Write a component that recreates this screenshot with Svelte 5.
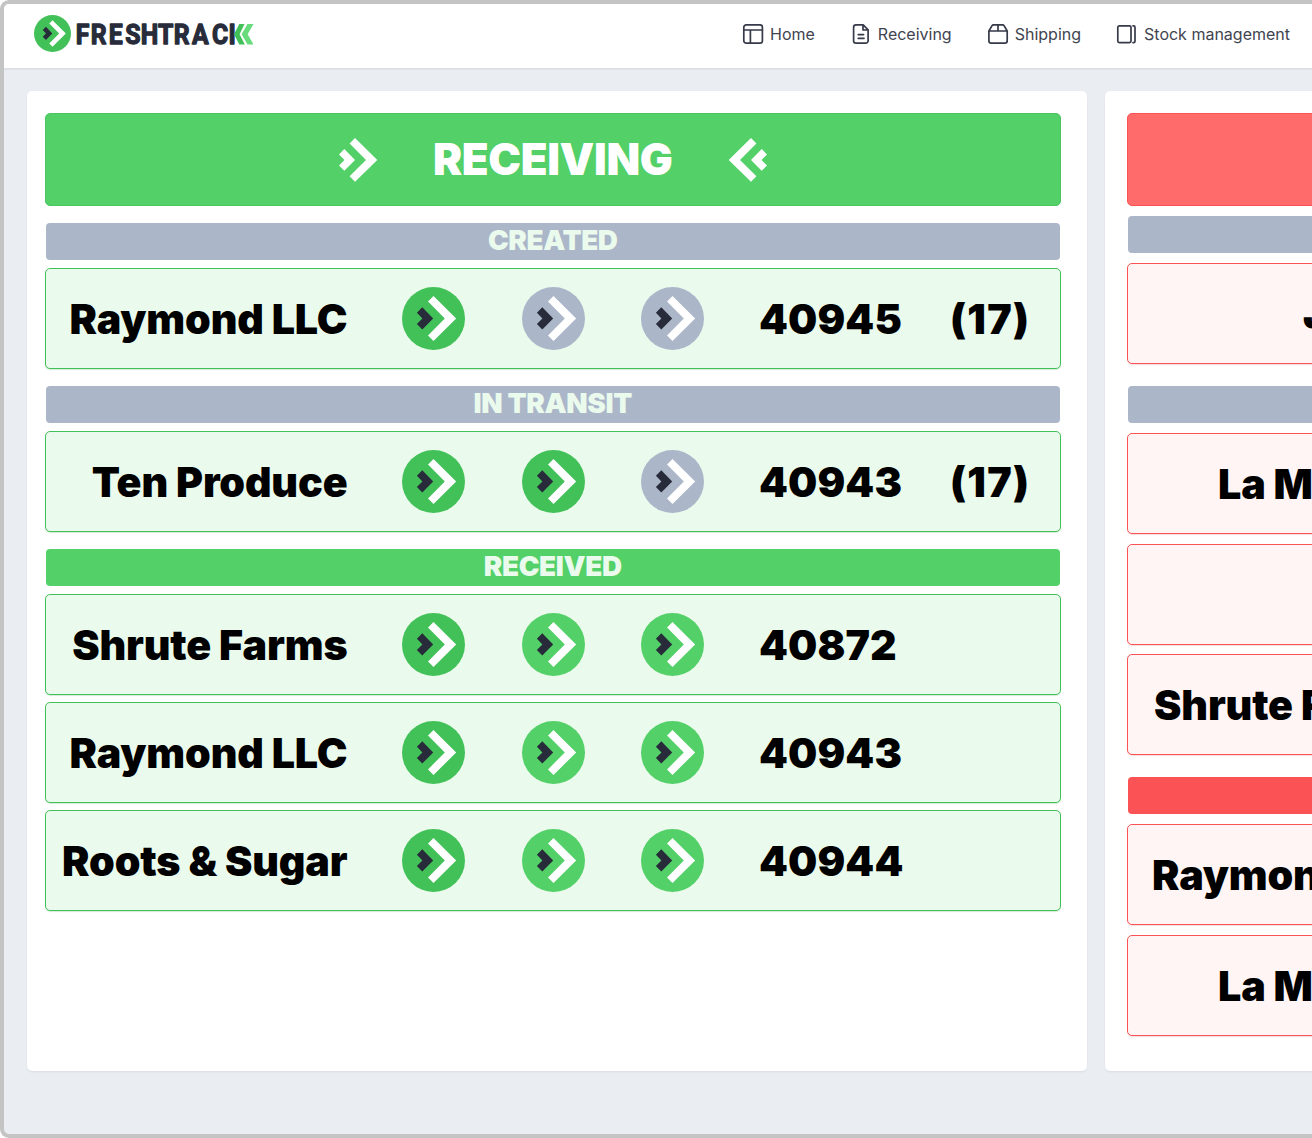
<script>
  const nav = [
    { icon: 'layout', label: 'Home' },
    { icon: 'file', label: 'Receiving' },
    { icon: 'box', label: 'Shipping' },
    { icon: 'stack', label: 'Stock management' }
  ];

  const incoming = [
    {
      title: 'CREATED',
      done: false,
      rows: [{ name: 'Raymond LLC', steps: ['solid', 'idle', 'idle'], order: '40945', count: '(17)' }]
    },
    {
      title: 'IN TRANSIT',
      done: false,
      rows: [{ name: 'Ten Produce', steps: ['solid', 'solid', 'idle'], order: '40943', count: '(17)' }]
    },
    {
      title: 'RECEIVED',
      done: true,
      rows: [
        { name: 'Shrute Farms', steps: ['solid', 'light', 'light'], order: '40872', count: '' },
        { name: 'Raymond LLC', steps: ['solid', 'light', 'light'], order: '40943', count: '' },
        { name: 'Roots & Sugar', steps: ['solid', 'light', 'light'], order: '40944', count: '' }
      ]
    }
  ];

  // indent is where the name begins inside its row
  const outgoing = [
    { done: false, rows: [{ name: 'J', indent: 175 }] },
    { done: false, rows: [{ name: 'La M', indent: 90 }, { name: '', indent: 0 }, { name: 'Shrute Farms', indent: 26 }] },
    { done: true, rows: [{ name: 'Raymond LLC', indent: 24 }, { name: 'La M', indent: 90 }] }
  ];
</script>

{#snippet chevrons(kind)}
  <svg class="mark {kind}" viewBox="0 0 63 63" aria-hidden="true">
    <circle class="disc" cx="31.5" cy="31.5" r="31.5" />
    <path class="small" d="M20.3 20.2 31.2 31.4 20.3 42.4 14.9 37 20.4 31.4 14.9 25.7Z" />
    <path class="big" d="M31.5 9 54.2 31.4 31.5 54 26 48.4 42.8 31.4 26 14.5Z" />
  </svg>
{/snippet}

{#snippet arrows(flipped)}
  <svg class="arrows" class:flipped viewBox="0 0 40 44" aria-hidden="true">
    <path d="M6.3 11 17 22 6.3 32.7 1 27.4 6.5 22 1 16.4Z M17 0 39.3 22 17 43.7 11.6 38.3 28 22 11.6 5.4Z" />
  </svg>
{/snippet}

<div class="window">
  <header>
    <div class="brand">
      <div class="badge">{@render chevrons('solid')}</div>
      <svg class="wordmark" viewBox="0 0 180 30" aria-label="FRESHTRACK">
        <text transform="scale(.9 1)" y="25" x="-0.2 16.4 36.4 54.8 72 91 108.6 129 151 169.4">FRESHTRACI</text>
        <path fill="#43c159" d="M168.5 5h-5.2L158 15.200l5.300 10.300h5.500L163.600 15.200Z" />
        <path fill="#68dc7c" d="M177.500 5h-6L165.600 15.200l5.900 10.300h6L171.700 15.200Z" />
      </svg>
    </div>
    <nav>
      {#each nav as item}
        <a class="link">
          <svg class="icon" viewBox="0 0 22 22" aria-hidden="true">
            {#if item.icon === 'layout'}
              <rect x="1.8" y="1.8" width="18.6" height="18.4" rx="2.4" />
              <path d="M2 7h18.4M8.4 7v13" />
            {:else if item.icon === 'file'}
              <path d="M6 1.8h7.2l4.9 5v11a2.4 2.4 0 0 1-2.4 2.4H6a2.4 2.4 0 0 1-2.4-2.4V4.2A2.4 2.4 0 0 1 6 1.8ZM13 2v5h5M8.2 11.6h5.3M8.2 15.3h5.8" />
            {:else if item.icon === 'box'}
              <path d="M1.9 8v9.8a2.4 2.4 0 0 0 2.4 2.4h13.5a2.4 2.4 0 0 0 2.4-2.4V8L17.2 2.8a2 2 0 0 0-1.7-1H6.6a2 2 0 0 0-1.7 1ZM2 8h18.2M11 2v6" />
            {:else}
              <rect x="1.8" y="2.8" width="13.2" height="16.8" rx="1.5" />
              <path d="M17 2.8h.6a1.4 1.4 0 0 1 1.4 1.4v14a1.4 1.4 0 0 1-1.4 1.4H17" />
            {/if}
          </svg>
          <span>{item.label}</span>
        </a>
      {/each}
    </nav>
  </header>

  <main>
    <section class="panel receiving">
      <div class="banner">
        {@render arrows(false)}
        <h1>RECEIVING</h1>
        {@render arrows(true)}
      </div>
      {#each incoming as group}
        <div class="group">
          <h2 class:done={group.done}>{group.title}</h2>
          <div class="rows">
            {#each group.rows as row}
              <div class="row">
                <span class="name">{row.name}</span>
                <div class="steps">
                  {#each row.steps as step}{@render chevrons(step)}{/each}
                </div>
                <span class="order">{row.order}</span>
                <span class="count">{row.count}</span>
              </div>
            {/each}
          </div>
        </div>
      {/each}
    </section>

    <section class="panel shipments">
      <div class="banner"></div>
      {#each outgoing as group}
        <div class="group">
          <h2 class:done={group.done}></h2>
          <div class="rows">
            {#each group.rows as row}
              <div class="row">
                <span class="name" style:padding-left="{row.indent}px">{row.name}</span>
              </div>
            {/each}
          </div>
        </div>
      {/each}
    </section>
  </main>
</div>

<style>
  :global(body) {
    background: #fff;
    overflow: hidden;
  }
  * {
    box-sizing: border-box;
  }
  .window {
    width: 1312px;
    height: 1138px;
    border: 4px solid #c4c4c4;
    border-right: 0;
    border-radius: 9px 0 0 9px;
    background: #eaeef3;
    overflow: hidden;
    font-family: Inter, 'Liberation Sans', sans-serif;
    color: #000;
  }
  header {
    height: 65px;
    background: #fff;
    border-bottom: 1px solid #dddde3;
    box-shadow: 0 1px 1px #e2e4ea;
    display: flex;
    justify-content: space-between;
    align-items: flex-start;
    padding: 11px 22px 0 30px;
  }
  .brand {
    display: flex;
  }
  .badge {
    width: 37px;
    height: 37px;
  }
  .badge .mark {
    width: 37px;
    height: 37px;
  }
  .wordmark {
    width: 180px;
    height: 30px;
    margin: 4px 0 0 5px;
  }
  .wordmark text {
    font: 700 27.5px Roboto, sans-serif;
    fill: #272b3a;
    stroke: #272b3a;
    stroke-width: 1.3;
    stroke-linejoin: round;
  }
  nav {
    display: flex;
    padding-top: 8px;
  }
  .link {
    display: flex;
    align-items: center;
    color: #41444f;
    font-size: 16px;
    line-height: 22px;
    white-space: nowrap;
  }
  .icon {
    width: 22px;
    height: 22px;
    margin-right: 6px;
    fill: none;
    stroke: #363a49;
    stroke-width: 1.7;
    stroke-linejoin: round;
    stroke-linecap: round;
  }
  .link + .link {
    margin-left: 35px;
  }
  main {
    display: flex;
    gap: 18px;
    padding: 22px 0 0 23px;
  }
  .panel {
    height: 980px;
    flex: none;
    background: #fff;
    border-radius: 5px;
    box-shadow: 0 1px 2px #d9dce4;
  }
  .receiving {
    width: 1060px;
    padding: 22px 26px 0 17.5px;
  }
  .shipments {
    width: 1060px;
    padding: 22px;
  }
  .banner {
    height: 93px;
    border: 1px solid #4bc560;
    border-radius: 5px;
    background: #53d068;
    display: flex;
    justify-content: center;
    align-items: center;
    gap: 55px;
    color: #fff;
  }
  .shipments .banner {
    background: #ff6b6b;
    border-color: #fb5355;
  }
  .arrows {
    width: 40px;
    height: 44px;
    fill: #fff;
  }
  .flipped {
    transform: scaleX(-1);
  }
  h1,
  h2 {
    margin: 0;
    font-weight: 900;
  }
  h1 {
    font-size: 43.8px;
    line-height: 50px;
    letter-spacing: -0.35px;
  }
  .group {
    margin-top: 17px;
    display: flex;
    flex-direction: column;
    gap: 8px;
  }
  .rows {
    display: flex;
    flex-direction: column;
    gap: 7.2px;
  }
  h2 {
    height: 37px;
    margin: 0 1px;
    border-radius: 4px;
    background: #abb6c9;
    color: #eafaec;
    font-size: 27.8px;
    line-height: 35px;
    letter-spacing: -0.35px;
    text-align: center;
  }
  .receiving h2.done {
    background: #53d068;
  }
  .row {
    height: 101px;
    flex: none;
    border: 1px solid #43c159;
    border-radius: 5px;
    background: #eafaec;
    display: flex;
    align-items: center;
    font-size: 41.2px;
    font-weight: 900;
    line-height: 52px;
    white-space: nowrap;
    box-shadow: 0 1px 1px #d4ecd8;
  }
  .name {
    letter-spacing: -0.15px;
    padding-top: 1px;
  }
  .receiving .name {
    width: 302px;
    text-align: right;
  }
  .steps {
    display: flex;
    gap: 56.7px;
    margin-left: 54.5px;
  }
  .mark {
    display: block;
    width: 63px;
    height: 63px;
  }
  .mark .disc {
    fill: #43c159;
  }
  .mark.light .disc {
    fill: #53d068;
  }
  .mark.idle .disc {
    fill: #abb6c9;
  }
  .mark .small {
    fill: #272b3a;
  }
  .mark .big {
    fill: #fff;
  }
  .order {
    width: 191px;
    margin-left: 54.7px;
    padding-top: 1px;
    letter-spacing: 0.1px;
  }
  .count {
    padding-top: 1px;
    letter-spacing: 1.3px;
  }
  .shipments .group {
    margin-top: 22px;
    gap: 10px;
  }
  .shipments .rows {
    gap: 9.6px;
  }
  .shipments .banner + .group {
    margin-top: 10px;
  }
  .shipments h2.done {
    background: #fb5355;
  }
  .shipments .row {
    background: #fff5f4;
    border-color: #fb5355;
    box-shadow: 0 1px 1px #f6dcdc;
  }
</style>
